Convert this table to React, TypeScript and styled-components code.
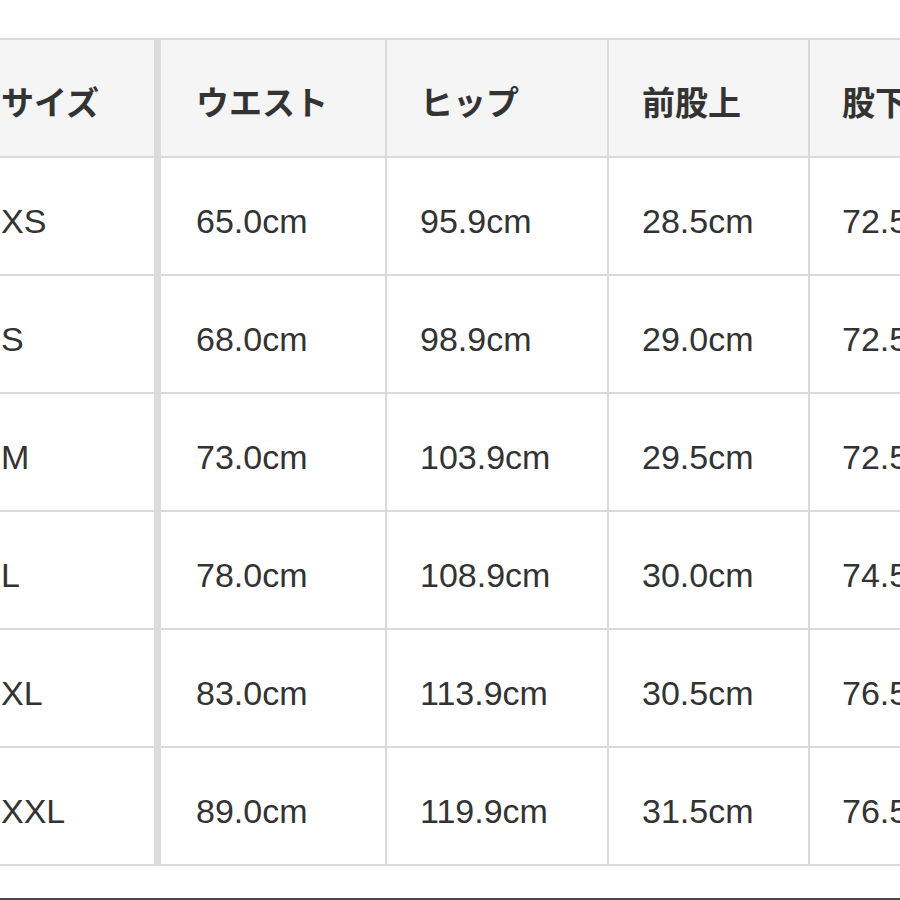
import React from 'react';
import styled, { createGlobalStyle } from 'styled-components';

const GlobalStyle = createGlobalStyle`
  html, body {
    margin: 0;
    padding: 0;
    background: #ffffff;
    overflow: hidden;
  }
`;

const Page = styled.div`
  width: 900px;
  height: 900px;
  box-sizing: border-box;
  overflow: hidden;
  padding-top: 38px;
  border-bottom: 2px solid #4a4a4a;
  background: #ffffff;
`;

const SizeTable = styled.table`
  margin-left: -34px;
  border-collapse: separate;
  border-spacing: 0;
  table-layout: fixed;
  width: 1044px;
  border-top: 2px solid #dadada;
`;

const HeadCell = styled.th<{ $w: number; $first?: boolean; $pad: number }>`
  box-sizing: border-box;
  width: ${(p) => p.$w}px;
  height: 118px;
  padding: 6px 0 0 ${(p) => p.$pad}px;
  text-align: left;
  vertical-align: middle;
  background: #f5f5f5;
  border-bottom: 2px solid #dadada;
  border-right: ${(p) => (p.$first ? '7px solid #dcdcdc' : '2px solid #dadada')};
  font-family: 'Noto Sans CJK JP', 'Noto Sans', sans-serif;
  font-weight: 700;
  font-size: 33px;
  color: #333333;
  white-space: nowrap;
  overflow: hidden;
`;

const Cell = styled.td<{ $first?: boolean; $pad: number }>`
  box-sizing: border-box;
  height: 118px;
  padding: 10px 0 0 ${(p) => p.$pad}px;
  vertical-align: middle;
  background: #ffffff;
  border-bottom: 2px solid #dadada;
  border-right: ${(p) => (p.$first ? '7px solid #dcdcdc' : '2px solid #dadada')};
  font-family: 'Liberation Sans', Arial, sans-serif;
  font-weight: 400;
  font-size: 34px;
  color: #333333;
  white-space: nowrap;
  overflow: hidden;
`;

const columns = [
  { label: 'サイズ', w: 195, pad: 35 },
  { label: 'ウエスト', w: 226, pad: 35 },
  { label: 'ヒップ', w: 222, pad: 33 },
  { label: '前股上', w: 201, pad: 33 },
  { label: '股下', w: 200, pad: 32 },
];

const rows = [
  ['XS', '65.0cm', '95.9cm', '28.5cm', '72.5cm'],
  ['S', '68.0cm', '98.9cm', '29.0cm', '72.5cm'],
  ['M', '73.0cm', '103.9cm', '29.5cm', '72.5cm'],
  ['L', '78.0cm', '108.9cm', '30.0cm', '74.5cm'],
  ['XL', '83.0cm', '113.9cm', '30.5cm', '76.5cm'],
  ['XXL', '89.0cm', '119.9cm', '31.5cm', '76.5cm'],
];

const App: React.FC = () => {
  return (
    <React.Fragment>
      <GlobalStyle />
      <Page>
        <SizeTable>
          <thead>
            <tr>
              {columns.map((col, i) => (
                <HeadCell key={col.label} $w={col.w} $pad={col.pad} $first={i === 0}>
                  {col.label}
                </HeadCell>
              ))}
            </tr>
          </thead>
          <tbody>
            {rows.map((row) => (
              <tr key={row[0]}>
                {row.map((value, i) => (
                  <Cell key={i} $pad={columns[i].pad} $first={i === 0}>
                    {value}
                  </Cell>
                ))}
              </tr>
            ))}
          </tbody>
        </SizeTable>
      </Page>
    </React.Fragment>
  );
};

export default App;
